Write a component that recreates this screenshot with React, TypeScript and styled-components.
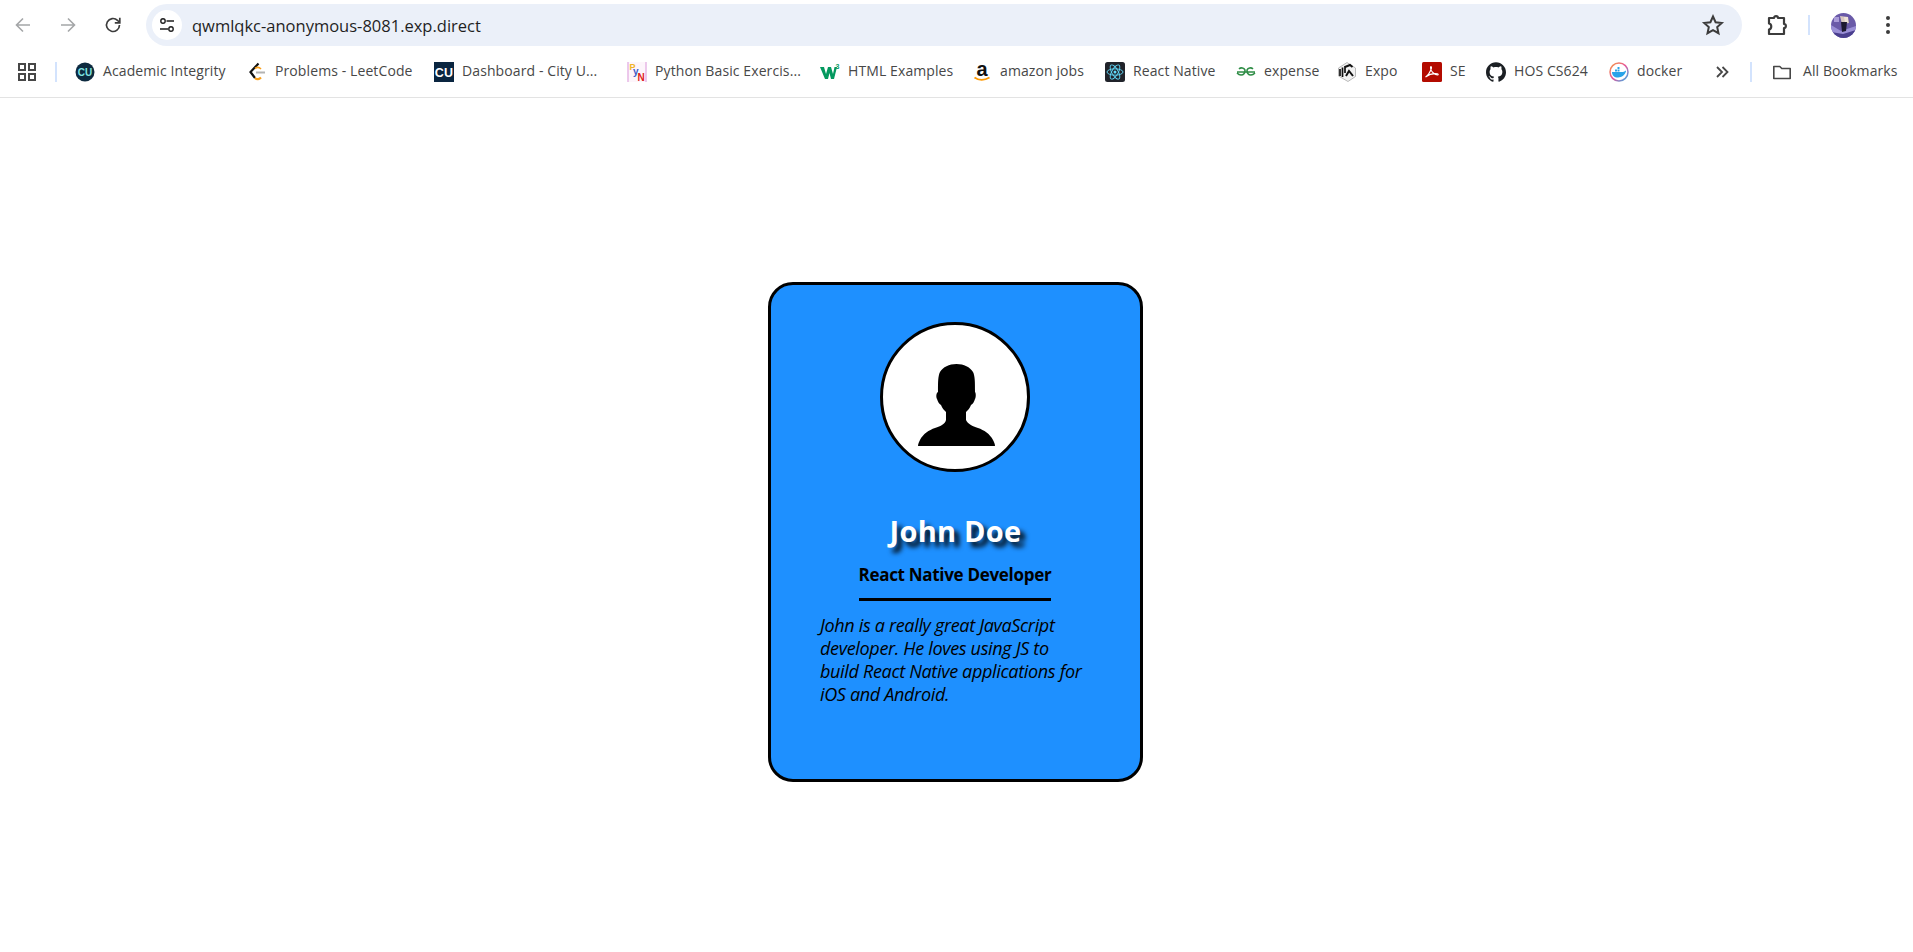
import React from "react";
import styled, { createGlobalStyle } from "styled-components";
import { SiGithub } from "react-icons/si";

const Global = createGlobalStyle`
  html, body { margin: 0; padding: 0; background: #fff; }
  body { font-family: "Open Sans", "Noto Sans", sans-serif; }
`;
const Page = styled.div`
  width: 1913px; height: 952px; display: flex; flex-direction: column; overflow: hidden; background: #fff;
`;
const TopBar = styled.div`
  height: 47px; display: flex; align-items: center; padding: 3px 0 0 11px; box-sizing: border-box;
`;
const NavButton = styled.div`
  width: 24px; height: 24px; display: flex; align-items: center; justify-content: center; margin-right: 21px;
`;
const Omnibox = styled.div`
  width: 1596px; height: 42px; border-radius: 21px; background: #ebf0f9; display: flex; align-items: center; padding: 0 17px 0 6px; box-sizing: border-box;
`;
const SiteChip = styled.div`
  width: 30px; height: 30px; border-radius: 50%; background: #fff; display: flex; align-items: center; justify-content: center; margin-right: 10px;
`;
const Url = styled.div`
  flex: 1; font-size: 16.5px; color: #1f1f1f;
`;
const RightTools = styled.div`
  display: flex; align-items: center; margin-left: 23px;
`;
const Separator = styled.div<{ $mx: string }>`
  width: 2px; height: 20px; flex: none; background: #d3e3fd; margin: ${p => p.$mx};
`;
const Avatar = styled.div`
  width: 25px; height: 25px; border-radius: 50%; overflow: hidden; margin: 0 29px 0 -1px;
`;
const BookmarkBar = styled.div`
  height: 49px; padding: 0 0 1px 17px; display: flex; align-items: center; border-bottom: 1px solid #e3e3e3; box-sizing: content-box;
`;
const Bookmark = styled.div<{ $w: number; $gap?: number }>`
  width: ${p => p.$w}px; display: flex; align-items: center; flex: none; font-size: 14px; color: #474747; white-space: nowrap; gap: ${p => p.$gap ?? 8}px; letter-spacing: 0.1px;
`;
const Fav = styled.span`
  width: 20px; height: 20px; flex: none; display: flex; align-items: center; justify-content: center;
`;
const Label = styled.span`
  margin-top: -2px;
`;
const Content = styled.main`
  flex: 1; display: flex; justify-content: center; align-items: flex-start; padding: 184px 2px 0 0;
`;
const Card = styled.section`
  width: 375px; height: 500px; box-sizing: border-box; background: #1e90ff; border: 3px solid #000; border-radius: 25px; display: flex; flex-direction: column; align-items: center; padding-top: 37px;
`;
const Photo = styled.div`
  width: 150px; height: 150px; box-sizing: border-box; border: 3px solid #000; border-radius: 50%; background: #fff; display: flex; align-items: center; justify-content: center; margin-right: 2px;
`;
const Name = styled.h1`
  margin: 40px 0 0; font-size: 29px; line-height: 38px; font-weight: 700; color: #fff; letter-spacing: 0.25px; text-shadow: 5px 5px 5px #000;
`;
const Role = styled.h2`
  margin: 12px 2px 0 0; font-size: 17px; line-height: 25px; font-weight: 700; color: #000; padding-bottom: 11px; border-bottom: 3px solid #000; letter-spacing: -0.3px; width: 192px; text-align: center; white-space: nowrap;
`;
const Bio = styled.p`
  margin: 13px 0 0 49px; align-self: flex-start; width: 265px; font-size: 18px; line-height: 23px; font-style: italic; color: #000; letter-spacing: -0.33px;
`;

const Silhouette = () => (
  <svg width="77" height="82" viewBox="0 0 77 82" style={{ margin: "16px 0 0 3px", filter: "blur(0.5px)" }}>
    <path d="M38.500 0C46 0 52 3 55 8C57 12 57 18 57 28C58 29 58 33 57 35C56 38 55 40 53 41C52 44 50 46 48 48L48 56C50 60 54 62 60 64C66 66 72 70 75 76C76 78 77 80 77 82L0 82C0 80 1 78 2 76C5 70 11 66 17 64C23 62 27 60 28 56L28 48C26 46 24 44 23 41C21 40 20 38 19 35C18 33 18 29 20 28C20 18 20 12 22 8C25 3 31 0 38.500 0Z" fill="#000" />
  </svg>
);

const Arrow = ({ dir, color }: { dir: "l" | "r"; color: string }) => (
  <svg width="20" height="20" viewBox="0 0 20 20" fill="none" stroke={color} strokeWidth="1.600">
    {dir === "l" ? <path d="M17 10H4M10 3.500 3.500 10l6.500 6.500" /> : <path d="M3 10h13M10 3.500l6.500 6.500-6.500 6.500" />}
  </svg>
);

const Icon = {
  cu: <svg width="20" height="20" viewBox="0 0 20 20"><circle cx="10" cy="10" r="9.500" fill="#0d2a3f" /><text x="10" y="13.500" fontSize="10" fontWeight="700" textAnchor="middle" fill="#7fe3e0" fontFamily="Liberation Sans">CU</text></svg>,
  leet: <svg width="20" height="20" viewBox="0 0 20 20" fill="none"><path d="M11.500 1.500 3.500 10l4.500 6" stroke="#111" strokeWidth="2.200" /><path d="M8 16c2 2 4 1.500 6-.5" stroke="#f89f1b" strokeWidth="2.200" /><path d="M9 10.500h9" stroke="#b3b3b3" strokeWidth="2" /><path d="M8 6.500c2-1.500 4-1.500 6 .5" stroke="#f89f1b" strokeWidth="1.600" /></svg>,
  cuSquare: <svg width="20" height="20" viewBox="0 0 20 20"><rect width="20" height="20" fill="#0a2540" /><text x="10" y="15" fontSize="12.500" fontWeight="700" textAnchor="middle" fill="#fff" fontFamily="Liberation Sans">CU</text></svg>,
  py: <svg width="20" height="20" viewBox="0 0 20 20"><rect x="1" y="0" width="18" height="20" fill="#fdf5fb" /><path d="M1 0v20M19 0v20" stroke="#e6b8e6" strokeWidth="1.500" /><text x="2.500" y="8" fontSize="9" fontWeight="700" fill="#f0b429" fontFamily="Liberation Sans">P</text><text x="6" y="13" fontSize="10" fontWeight="700" fill="#3b5bc9" fontFamily="Liberation Sans">y</text><text x="10.500" y="19" fontSize="10" fontWeight="700" fill="#e02020" fontFamily="Liberation Sans">N</text></svg>,
  w3: <svg width="20" height="20" viewBox="0 0 20 20"><path d="M0 5h4l2 7 2-7h3l2 7 1.500-7H17l-3 12h-3L9.500 11 8 17H5z" fill="#04995f" /><text x="15.500" y="7" fontSize="7" fontWeight="700" fill="#04995f" fontFamily="Liberation Sans">3</text></svg>,
  amazon: <svg width="20" height="20" viewBox="0 0 20 20"><text x="10" y="14" fontSize="20" fontWeight="700" textAnchor="middle" fill="#111" fontFamily="Liberation Sans">a</text><path d="M2.500 15.500c4 3 10 3 15 0" stroke="#f90" strokeWidth="1.800" fill="none" /></svg>,
  react: <svg width="20" height="20" viewBox="0 0 20 20"><rect width="20" height="20" rx="2.500" fill="#20232a" /><g fill="none" stroke="#61dafb" strokeWidth="0.900"><ellipse cx="10" cy="10" rx="8" ry="3.200" /><ellipse cx="10" cy="10" rx="8" ry="3.200" transform="rotate(60 10 10)" /><ellipse cx="10" cy="10" rx="8" ry="3.200" transform="rotate(120 10 10)" /></g><circle cx="10" cy="10" r="1.500" fill="#61dafb" /></svg>,
  gfg: <svg width="20" height="20" viewBox="0 0 20 20" fill="none" stroke="#2f8d46" strokeWidth="1.600"><path d="M1 10h18M3 7c2-2 5-1 6 1 0 4-2 5-4 5s-3-1-4-2M17 7c-2-2-5-1-6 1 0 4 2 5 4 5s3-1 4-2" /></svg>,
  expo: <svg width="20" height="20" viewBox="0 0 20 20"><path d="M10 .5 18.500 6v8.500L11 19.500 1.500 14V6z" fill="#f2f2f2" stroke="#aaa" strokeWidth="0.800" /><path d="M3 7v7M5.500 5.500V15M8 4v7" stroke="#111" strokeWidth="1.700" fill="none" /><path d="M8 5l5-2 2.500 2M9 14l3-5 4 5" stroke="#111" strokeWidth="2" fill="none" /></svg>,
  pdf: <svg width="20" height="20" viewBox="0 0 20 20"><rect width="20" height="20" rx="1.500" fill="#b30b00" /><path d="M3.500 15c2-1 5-5 6-9 .3-1.500-.8-2-1-.5-.2 3 3 7 7 7.500 1 0 1-1 0-1.200-4-.5-9 1-12 3.200z" fill="none" stroke="#fff" strokeWidth="1.100" /></svg>,
  docker: <svg width="20" height="20" viewBox="0 0 20 20"><defs><linearGradient id="ring" x1="0" y1="0" x2="1" y2="1"><stop offset="0" stopColor="#f59e42" /><stop offset="0.500" stopColor="#e8559b" /><stop offset="1" stopColor="#2bb3ea" /></linearGradient></defs><circle cx="10" cy="10" r="9" fill="#fff" stroke="url(#ring)" strokeWidth="1.500" /><path d="M3 10h11c1 0 2-1 2.500-1.500.5.500.5 1 .5 1-1 3-4 6-8 6-4 0-6-2-6-5.500z" fill="#2aa3e8" /><path d="M6 7.500h2v2H6zM8.500 7.500h2v2h-2zM8.500 5h2v2h-2z" fill="#2aa3e8" /></svg>,
};

const bookmarks: { label: string; icon: React.ReactNode; w: number }[] = [
  { label: "Academic Integrity", icon: Icon.cu, w: 172 },
  { label: "Problems - LeetCode", icon: Icon.leet, w: 187 },
  { label: "Dashboard - City U...", icon: Icon.cuSquare, w: 193 },
  { label: "Python Basic Exercis...", icon: Icon.py, w: 193 },
  { label: "HTML Examples", icon: Icon.w3, w: 152 },
  { label: "amazon jobs", icon: Icon.amazon, w: 133 },
  { label: "React Native", icon: Icon.react, w: 131 },
  { label: "expense", icon: Icon.gfg, w: 101 },
  { label: "Expo", icon: Icon.expo, w: 85 },
  { label: "SE", icon: Icon.pdf, w: 64 },
  { label: "HOS CS624", icon: <SiGithub size={20} color="#1b1f23" />, w: 123 },
  { label: "docker", icon: Icon.docker, w: 105 },
];

export default function App() {
  return (
    <Page>
      <Global />
      <TopBar>
        <NavButton><Arrow dir="l" color="#a4a6a8" /></NavButton>
        <NavButton><Arrow dir="r" color="#a4a6a8" /></NavButton>
        <NavButton>
          <svg width="20" height="20" viewBox="0 0 20 20" fill="none" stroke="#3c3c3c" strokeWidth="1.700"><path d="M16.500 10a6.500 6.500 0 1 1-2-4.700L16.500 7.500" /><path d="M16.800 2.800v5h-5" /></svg>
        </NavButton>
        <Omnibox>
          <SiteChip>
            <svg width="18" height="18" viewBox="0 0 18 18" fill="none" stroke="#1f1f1f" strokeWidth="1.400"><circle cx="5" cy="5" r="2.200" /><path d="M8.500 5H16M2 13h8" /><circle cx="13" cy="13" r="2.200" /></svg>
          </SiteChip>
          <Url>qwmlqkc-anonymous-8081.exp.direct</Url>
          <svg width="24" height="24" viewBox="0 0 24 24" fill="none" stroke="#3c3c3c" strokeWidth="2"><path d="M12 3.500l2.600 5.700 6.200.7-4.600 4.200 1.300 6.100L12 17.100l-5.500 3.100 1.300-6.100-4.600-4.200 6.200-.7z" /></svg>
        </Omnibox>
        <RightTools>
          <svg width="24" height="24" viewBox="0 0 24 24" fill="none" stroke="#3c3c3c" strokeWidth="2.200"><path d="M4 5h5c0-2.500 4-2.500 4 0h6v6c2.500 0 2.500 4 0 4v6H4v-4.500c3-.5 3-5.500 0-6z" strokeLinejoin="round" /></svg>
          <Separator $mx="0 22px 0 19px" />
          <Avatar>
            <svg width="25" height="25" viewBox="0 0 25 25"><rect width="25" height="25" fill="#6a5aa8" /><path d="M0 12l10 6 15-5v12H0z" fill="#9a8fd6" /><path d="M0 19l12 2 13-4v8H0z" fill="#4a3f8e" /><path d="M9 3l8 1 1 6-7 1z" fill="#d9c8c0" /><path d="M10 9l6 0-1 9-4 1z" fill="#1d1830" /><path d="M13 4h4v5h-3z" fill="#efe3d8" /><path d="M3 4h5v5H3z" fill="#a99bd8" /></svg>
          </Avatar>
          <svg width="6" height="20" viewBox="0 0 6 20" fill="#3c3c3c"><circle cx="3" cy="3" r="2" /><circle cx="3" cy="10" r="2" /><circle cx="3" cy="17" r="2" /></svg>
        </RightTools>
      </TopBar>
      <BookmarkBar>
        <svg width="20" height="20" viewBox="0 0 20 20" fill="none" stroke="#474747" strokeWidth="2" style={{ flex: "none" }}><rect x="2" y="2" width="6" height="6" /><rect x="12" y="2" width="6" height="6" /><rect x="2" y="12" width="6" height="6" /><rect x="12" y="12" width="6" height="6" /></svg>
        <Separator $mx="0 18px 0 18px" />
        {bookmarks.map(b => (
          <Bookmark key={b.label} $w={b.w}><Fav>{b.icon}</Fav><Label>{b.label}</Label></Bookmark>
        ))}
        <svg width="16" height="16" viewBox="0 0 16 16" fill="none" stroke="#474747" strokeWidth="1.800" style={{ flex: "none" }}><path d="M3 3l5 5-5 5M8.500 3l5 5-5 5" /></svg>
        <Separator $mx="0 20px 0 20px" />
        <Bookmark $w={125} $gap={11}>
          <Fav><svg width="20" height="20" viewBox="0 0 20 20" fill="none" stroke="#474747" strokeWidth="1.600"><path d="M1.800 4.500h6l2 2h8.400v10H1.800z" strokeLinejoin="round" /></svg></Fav>
          <Label>All Bookmarks</Label>
        </Bookmark>
      </BookmarkBar>
      <Content>
        <Card>
          <Photo><Silhouette /></Photo>
          <Name>John Doe</Name>
          <Role>React Native Developer</Role>
          <Bio>John is a really great JavaScript developer. He loves using JS to build React Native applications for iOS and Android.</Bio>
        </Card>
      </Content>
    </Page>
  );
}
